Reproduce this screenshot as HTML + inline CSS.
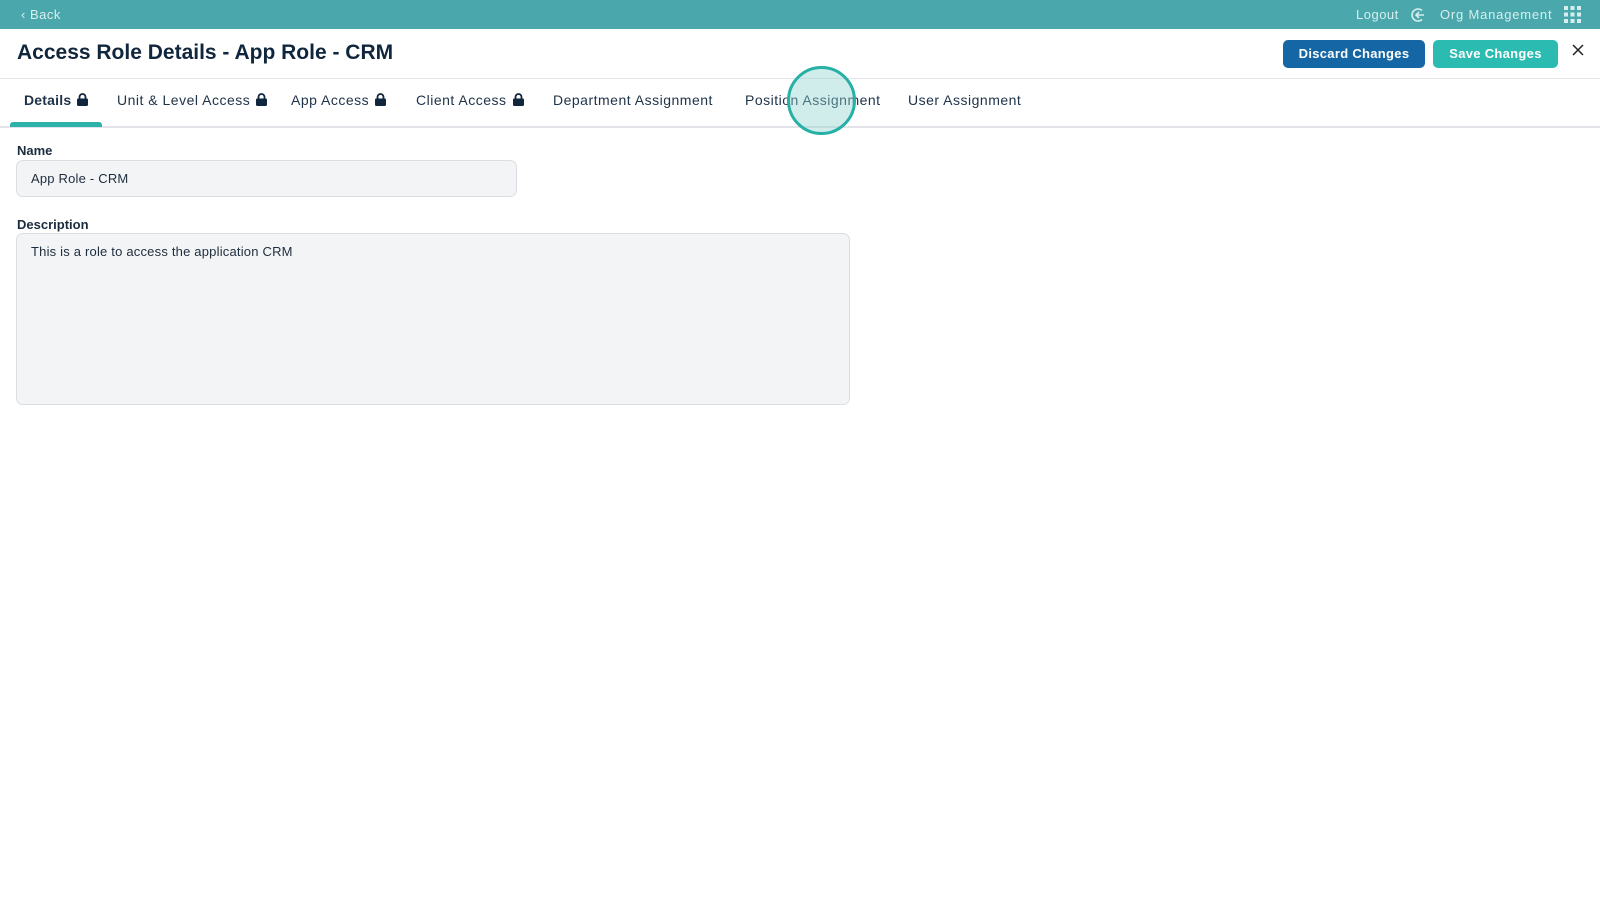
<!DOCTYPE html>
<html><head><meta charset="utf-8"><style>
*{box-sizing:border-box;margin:0;padding:0}
body{width:1600px;height:900px;background:#fff;font-family:"Liberation Sans",sans-serif;color:#1b2b3e;position:relative;overflow:hidden}
.abs{position:absolute}
.top{left:0;top:0;width:1600px;height:29px;background:#4aa8ac}
.tw{color:#d8eeee;font-size:13px;top:7px;letter-spacing:0.5px}
.title{left:17px;top:41px;font-size:21px;font-weight:bold;color:#10263d}
.btn{top:40px;height:28px;border-radius:5px;color:#fff;font-size:13px;font-weight:bold;text-align:center;line-height:28px;letter-spacing:0.3px}
.tab{top:92px;font-size:14px;color:#1e3248;white-space:nowrap;letter-spacing:0.5px}
.lock{display:inline-block;vertical-align:-1px;margin-left:6px}
.lbl{font-size:13px;font-weight:bold;color:#1b2b3e}
.field{background:#f3f4f6;border:1px solid #dcdde3;border-radius:7px;font-size:13px;color:#1e2d3d;padding-left:14px;letter-spacing:0.2px}
</style></head><body>
<div class="abs top"></div>
<div class="abs tw" style="left:21px">‹ Back</div>
<div class="abs tw" style="left:1356px">Logout</div>
<svg class="abs" style="left:1410px;top:7px" width="16" height="16" viewBox="0 0 16 16" fill="none" stroke="#d8eeee" stroke-width="1.6"><path d="M12 3.5A6 6 0 1 0 12 12.5"/><path d="M14 8H6M9 5L6 8l3 3"/></svg>
<div class="abs tw" style="left:1440px;letter-spacing:0.8px">Org Management</div>
<svg class="abs" style="left:1564px;top:6px" width="17" height="17" viewBox="0 0 17 17" fill="#d8eeee"><rect x="0" y="0" width="4" height="4"/><rect x="6.5" y="0" width="4" height="4"/><rect x="13" y="0" width="4" height="4"/><rect x="0" y="6.5" width="4" height="4"/><rect x="6.5" y="6.5" width="4" height="4"/><rect x="13" y="6.5" width="4" height="4"/><rect x="0" y="13" width="4" height="4"/><rect x="6.5" y="13" width="4" height="4"/><rect x="13" y="13" width="4" height="4"/></svg>
<div class="abs title">Access Role Details - App Role - CRM</div>
<div class="abs btn" style="left:1283px;width:142px;background:#1466a5">Discard Changes</div>
<div class="abs btn" style="left:1433px;width:125px;background:#2bbbb0">Save Changes</div>
<svg class="abs" style="left:1572px;top:44px" width="12" height="12" viewBox="0 0 12 12" stroke="#222" stroke-width="1.5"><path d="M1 1l10 10M11 1L1 11"/></svg>
<div class="abs" style="left:0;top:78px;width:1600px;height:1px;background:#e3e4ea"></div>
<div class="abs" style="left:0;top:126px;width:1600px;height:2px;background:#e3e4ea"></div>
<div class="abs" style="left:10px;top:122px;width:92px;height:5px;background:#2bb3aa;border-radius:3px 3px 0 0"></div>
<div class="abs tab" style="left:24px;font-weight:bold;letter-spacing:0.2px">Details<svg class="lock" width="11" height="13" viewBox="0 0 11 13"><path d="M2.5 6V4a3 3 0 0 1 6 0v2" fill="none" stroke="#10263d" stroke-width="1.8"/><rect x="0" y="5.5" width="11" height="7.5" rx="1.2" fill="#10263d"/></svg></div>
<div class="abs tab" style="left:117px">Unit &amp; Level Access<svg class="lock" width="11" height="13" viewBox="0 0 11 13"><path d="M2.5 6V4a3 3 0 0 1 6 0v2" fill="none" stroke="#10263d" stroke-width="1.8"/><rect x="0" y="5.5" width="11" height="7.5" rx="1.2" fill="#10263d"/></svg></div>
<div class="abs tab" style="left:291px">App Access<svg class="lock" width="11" height="13" viewBox="0 0 11 13"><path d="M2.5 6V4a3 3 0 0 1 6 0v2" fill="none" stroke="#10263d" stroke-width="1.8"/><rect x="0" y="5.5" width="11" height="7.5" rx="1.2" fill="#10263d"/></svg></div>
<div class="abs tab" style="left:416px">Client Access<svg class="lock" width="11" height="13" viewBox="0 0 11 13"><path d="M2.5 6V4a3 3 0 0 1 6 0v2" fill="none" stroke="#10263d" stroke-width="1.8"/><rect x="0" y="5.5" width="11" height="7.5" rx="1.2" fill="#10263d"/></svg></div>
<div class="abs tab" style="left:553px">Department Assignment</div>
<div class="abs tab" style="left:745px">Position Assignment</div>
<div class="abs tab" style="left:908px">User Assignment</div>
<div class="abs" style="left:787px;top:66px;width:69px;height:69px;border-radius:50%;border:3px solid #26b0a6;background:rgba(140,210,205,0.4)"></div>
<div class="abs lbl" style="left:17px;top:143px">Name</div>
<div class="abs field" style="left:16px;top:160px;width:501px;height:37px;line-height:35px">App Role - CRM</div>
<div class="abs lbl" style="left:17px;top:217px">Description</div>
<div class="abs field" style="left:16px;top:233px;width:834px;height:172px;padding-top:10px">This is a role to access the application CRM</div>
</body></html>
